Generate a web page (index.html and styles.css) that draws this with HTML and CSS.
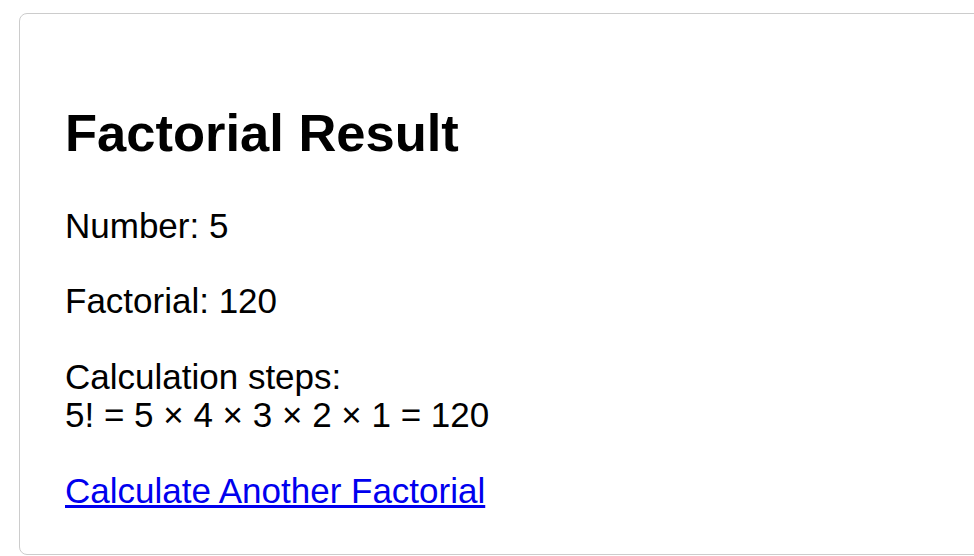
FILE: index.html
```html
<!DOCTYPE html>
<html lang="en">
<head>
<meta charset="utf-8">
<title>Factorial Result</title>
<link rel="stylesheet" href="styles.css">
</head>
<body>
<div class="card">
  <h2 class="title">Factorial Result</h2>
  <p class="line">Number: 5</p>
  <p class="line">Factorial: 120</p>
  <p class="line">Calculation steps:<br>5! = 5 × 4 × 3 × 2 × 1 = 120</p>
  <a class="back" href="#">Calculate Another Factorial</a>
</div>
</body>
</html>
```

FILE: styles.css
```css
html, body {
  margin: 0;
  padding: 0;
  overflow: hidden;
  background: #fff;
}
body {
  font-family: "Liberation Sans", Arial, sans-serif;
  font-size: 35px;
  line-height: 38.4px;
  color: #000;
  padding: 13px 0 0 19px;
}
.card {
  width: 1000px;
  border: 1px solid #ccc;
  border-radius: 8px;
  padding: 44px 45px;
}
.title {
  font-size: 52.5px;
  line-height: normal;
  font-weight: bold;
  margin: 44px 0;
}
.line {
  margin: 37px 0;
}
.back {
  color: #0000ee;
  text-decoration: underline;
}
```
